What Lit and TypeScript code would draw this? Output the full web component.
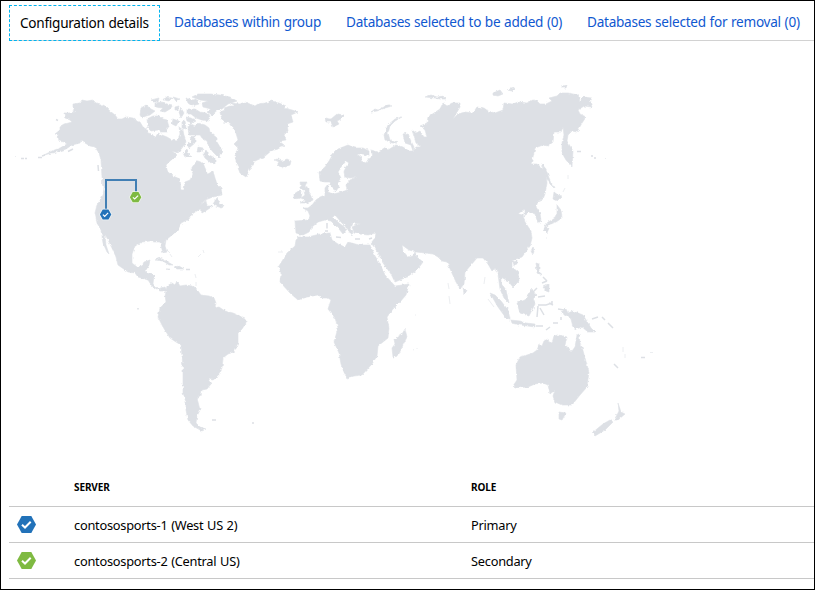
import { LitElement, html, css, svg } from "lit";
import { customElement, property } from "lit/decorators.js";

// Land outlines, in the coordinates of the map's viewBox.
const LAND: string[] = [
  // North and Central America
  "73,104 80,103 82,100 87,101 93,100 96,103 101,104 105,106 110,111 115,115 118,119 122,119 126,117 133,118 137,121 140,122 143,127 146,129 148,133 152,134 155,138 158,133 162,135 167,137 172,140 177,141 180,134 179,127 183,130 184,136 186,142 182,148 178,153 172,151 177,155 170,161 166,165 168,172 173,176 180,179 181,190 184,190 185,182 190,180 193,174 191,169 195,163 198,161 203,163 205,168 208,174 213,171 215,178 217,184 221,188 222,195 213,197 205,200 200,205 206,201 207,206 213,206 207,210 202,213 200,209 192,214 189,219 181,223 178,230 172,235 166,240 165,246 167,252 163,253 160,242 154,242 150,241 142,242 135,246 132,254 132,263 137,267 142,266 144,262 150,260 149,265 146,270 147,273 154,275 153,284 158,289 165,287 167,291 160,291 152,286 148,280 138,277 135,273 128,272 118,265 116,257 112,248 108,240 105,234 106,245 109,254 107,252 103,243 101,230 97,223 95,213 97,205 101,199 103,195 104,187 102,177 101,160 99,153 95,147 90,146 85,143 81,140 80,143 72,145 66,149 60,151 52,153 44,155 52,151 60,148 67,144 64,142 59,141 58,135 55,134 60,130 60,127 65,124 72,122 70,120 65,118 64,113 69,113 75,112 73,108",
  // South America
  "166,291 167,286 172,283 175,285 177,281 180,286 186,285 192,286 198,291 201,295 209,296 214,298 216,303 215,308 219,307 225,311 233,313 240,316 245,318 246,323 242,329 238,333 238,343 234,352 228,354 223,358 222,368 217,377 213,380 208,379 211,384 207,389 202,390 201,395 197,398 199,406 200,410 197,416 196,423 200,427 206,429 202,431 193,426 188,420 186,410 186,401 183,393 183,367 181,345 176,342 170,338 163,327 158,317 160,308 166,302 165,295",
  // Greenland
  "220,112 225,110 224,108 230,106 235,106 231,103 240,104 245,102 255,106 258,104 265,103 272,101 279,103 286,106 284,108 292,110 298,112 291,115 293,122 287,124 288,131 284,135 286,140 279,141 284,145 278,149 271,151 264,157 255,161 250,169 246,177 240,173 237,165 235,156 238,148 234,144 238,140 235,130 230,123 223,122 221,116",
  // Iceland
  "275,160 279,162 277,165 283,168 290,165 291,161 287,159 282,161 277,159",
  // Great Britain, Ireland
  "300,182 307,182 305,186 309,188 309,192 312,196 313,200 307,203 300,203 305,200 301,198 305,195 304,191 301,188",
  "294,194 300,190 302,193 301,198 294,199",
  // Europe and Asia
  "295,221 308,220 310,216 308,211 303,208 308,208 312,205 316,200 320,197 325,195 325,188 328,184 328,192 333,194 342,192 347,190 346,185 350,180 357,177 350,178 345,177 344,172 345,168 349,163 346,161 341,167 338,172 341,178 338,182 339,187 336,191 332,188 330,182 325,182 320,181 319,172 325,167 329,161 333,154 338,149 348,145 355,148 363,148 369,151 369,156 363,154 357,154 362,158 361,161 366,163 369,158 373,155 371,150 378,152 386,147 388,150 396,145 403,147 409,151 413,151 411,145 405,143 403,134 408,133 410,139 414,147 413,152 416,147 421,147 416,143 412,130 416,133 420,131 424,137 427,137 425,130 420,126 427,123 428,117 440,109 443,103 447,106 452,103 460,103 460,107 453,119 458,114 465,112 473,113 477,107 484,108 488,111 495,113 503,110 504,103 513,104 518,102 527,103 533,100 537,101 540,104 546,104 552,101 549,98 557,96 560,93 568,93 578,95 580,101 583,97 592,98 590,102 592,107 584,106 578,110 580,114 586,117 582,123 577,132 572,131 568,135 567,141 573,151 572,167 566,160 562,153 562,143 564,135 563,127 561,132 554,132 553,142 548,146 543,145 535,148 533,157 531,164 537,164 542,168 546,174 547,183 545,194 543,199 538,201 536,207 540,213 541,221 538,223 535,214 530,212 524,216 524,209 518,214 523,215 525,222 531,231 532,238 530,246 522,257 516,259 512,261 512,267 518,272 519,281 513,287 508,281 501,277 501,283 506,290 509,303 504,298 500,289 498,274 495,268 492,271 488,264 483,258 477,258 471,265 465,272 464,284 460,289 456,282 451,271 447,262 442,261 438,257 433,254 425,253 416,252 409,250 402,245 403,251 408,257 413,256 415,252 417,257 423,262 417,270 407,277 395,282 391,274 383,263 378,253 375,248 371,243 375,238 376,233 368,235 360,234 354,232 352,227 356,225 361,224 352,223 350,228 353,231 352,236 347,228 341,222 335,215 333,217 339,223 347,229 343,234 339,229 331,221 325,220 318,222 312,227 309,232 303,235 296,233",
  // Africa
  "299,237 308,237 320,234 330,233 332,240 338,244 345,247 348,242 359,245 370,245 375,256 380,264 385,275 395,286 409,284 406,295 400,302 393,309 387,317 389,328 388,338 378,346 377,356 372,364 362,375 354,376 347,378 344,372 341,364 339,353 334,342 338,328 335,318 328,309 331,300 328,298 323,298 318,295 307,297 298,300 290,293 280,282 281,273 279,266 287,253 295,246 296,240",
  "405,329 407,337 403,345 398,356 393,357 392,348 395,344 394,339 402,334",
  // Australia, Tasmania
  "537,350 539,345 542,346 544,341 548,339 549,342 552,343 554,336 558,335 563,336 567,337 565,345 572,351 575,347 577,335 579,334 580,343 582,347 585,358 589,372 587,387 580,395 572,405 562,405 555,402 553,396 555,390 550,394 548,385 543,383 535,384 528,387 515,388 513,386 517,380 516,365 520,357 527,355 533,353",
  "559,412 566,413 562,420 559,419",
  // New Zealand
  "618,403 621,412 625,414 618,420 614,420 617,415 619,411",
  "610,420 613,422 605,430 600,433 595,436 592,433 603,424",
  // New Guinea, Borneo, Sumatra, Java
  "561,312 566,309 568,313 573,311 583,315 588,323 591,328 595,332 588,332 582,327 576,329 573,327 571,319 566,315",
  "532,289 536,295 533,298 535,304 529,316 520,313 517,303 525,300",
  "490,293 495,295 501,301 508,310 510,319 506,318 498,307",
  "510,320 520,321 526,323 535,324 535,327 520,325 511,323",
  // Philippines, Taiwan, Hainan, Sri Lanka
  "536,263 539,264 539,271 542,276 537,273",
  "543,287 549,284 549,292 546,291",
  "533,247 534,251 533,255 531,251",
  "513,262 517,261 517,264 514,265",
  "463,287 466,290 464,294",
  // Japan, Sakhalin
  "554,192 558,195 562,196 557,201 553,199",
  "557,205 561,210 562,218 556,222 548,225 545,226 548,222 554,219 557,213",
  "545,226 549,228 547,233 544,230",
  "541,163 546,169 549,178 554,188 550,184 546,177",
  // Arctic islands of Eurasia
  "402,117 395,121 390,126 388,133 390,140 397,143 392,143 385,140 384,135 388,125 395,119",
  "325,118 331,119 337,114 345,115 341,119 337,121 339,124 333,127 331,122 326,122",
  "371,112 375,109 378,110 384,107 387,104 392,106 385,108 377,111",
  "425,97 431,95 437,97 443,96 446,99 440,99 435,98",
  "493,93 500,90 503,94 498,96 493,95",
  "507,90 515,88 512,91",
  "562,86 567,85 566,88 562,88",
  // Canadian Arctic
  "140,115 141,108 146,105 151,109 155,111 150,115 146,116 142,118",
  "147,119 153,116 160,116 163,119 167,120 169,127 166,128 168,132 161,132 158,130 151,131 148,128",
  "151,100 159,98 158,102 153,102",
  "155,103 162,102 167,104 173,105 170,109 165,112 160,111 163,108 155,107",
  "165,97 172,98 169,101 163,100",
  "173,119 179,121 176,126 172,124",
  "182,122 185,120 186,129 182,128",
  "181,108 184,113 181,118 179,112",
  "186,98 192,100 196,99 199,104 192,106 188,103",
  "187,109 195,109 200,112 206,113 210,116 208,121 202,120 196,118 191,114 187,114",
  "192,97 198,94 210,94 220,95 230,97 237,101 228,104 222,109 216,111 212,116 207,112 211,109 203,107 202,103 208,101 200,100",
  "188,127 191,124 195,126 198,123 205,125 209,128 210,132 217,138 217,142 223,152 220,154 219,158 213,152 209,147 207,141 202,138 200,135 194,135 189,135",
  "190,137 195,136 195,143 189,148 187,144 192,142",
  "206,150 209,155 215,158 215,164 211,163 205,158 203,154",
  "183,153 187,149 189,155 192,157 185,157",
  "198,147 203,148 202,152 197,152",
  "186,117 191,118 196,121 192,123 187,121",
  "175,107 179,106 178,110 175,110",
  "173,97 180,99 176,101",
  // Newfoundland
  "213,204 217,198 219,203 224,205 222,208 216,206",
  // Caribbean
  "155,260 160,258 166,261 173,265 169,265 163,261",
  "174,267 179,266 184,269 177,269",
  "166,269 170,269 169,270",
];

// Chains of small islands: thin lines rather than areas.
const ISLETS: string[] = [
  "M21 158.500h3M25 158.500h2M38 157.500h4M42 156l3 -1M68 151.500l5 -2.500",
  "M56 119.500l2 1M98 165l.5 6M102 180v4M186 269.500h4",
  "M138 308v1.500M212 420h4M252 423h2",
  "M327 223v5M325 231h3M336 237l5 .5M327 224.500v4M355 239h5M369 239l3 -1",
  "M538 297l7 -1M538 305l8 0l6 -2M538 306l-1 11M540 308l4 7M549 303l4 2M552 301v4",
  "M536 326h7M546 330l4 -3M553 323l5 0M558 309l6 1M561 317v3",
  "M543 277l4 4M542 283l5 -2M533 292l4 -4",
  "M592 319l6 -2M602 317l3 3M608 323l5 5M614 364l4 4M641 357.500h4",
  "M577 151.500h4M591 156h2M594 158h2",
];

// Specks that are barely there.
const SPECKS: string[] = [
  "M15 156.500h1M198 257l3 -3M203 250l1 3M168 251l2 2M170 254l2 3M195 274l1 4M196 282v4",
  "M281 251h1M278 252h5M413 350l1 -.5M417 348v1M415 315h1",
  "M448 283l1 6M485 277l-1 7M449 296l1 8M488 299l6 8",
  "M623 347v5M625 354v4M650 352.500h3M605 158.500h1M568 175v4M565 188l-2 4M546 238h1",
];

const hexagon = "0,8.500 4.700,0 14.300,0 19,8.500 14.300,17 4.700,17";

const mark = (colour: string) => svg`
  <polygon points=${hexagon} fill=${colour}></polygon>
  <path d="M5 8.700 L8 11.500 L13.700 5.800" fill="none" stroke="#fff" stroke-width="2"></path>
`;

@customElement("region-map")
export class RegionMap extends LitElement {
  static styles = css`
    :host { display: block; }
    svg { display: block; width: 813px; height: 426px; }
    .land { fill: #dde0e5; stroke: #dde0e5; stroke-width: 0.6; }
    .islets { fill: none; stroke: #dde0e5; stroke-width: 1.5; }
    .specks { fill: none; stroke: #eceef1; stroke-width: 1; }
    .link { fill: none; stroke: #417fb4; stroke-width: 2; }
  `;

  render() {
    return html`
      <svg viewBox="1 41 813 426">
        <defs>
          <filter id="coast" x="0" y="41" width="700" height="420" filterUnits="userSpaceOnUse" color-interpolation-filters="sRGB">
            <feTurbulence type="fractalNoise" baseFrequency="0.3" numOctaves="2" seed="4"></feTurbulence>
            <feDisplacementMap in="SourceGraphic" scale="3" xChannelSelector="R" yChannelSelector="G"></feDisplacementMap>
          </filter>
        </defs>
        <g class="land" filter="url(#coast)">${LAND.map((p) => svg`<polygon points=${p}></polygon>`)}</g>
        <g class="islets">${ISLETS.map((d) => svg`<path d=${d}></path>`)}</g>
        <g class="specks">${SPECKS.map((d) => svg`<path d=${d}></path>`)}</g>
        <path class="link" d="M106 210 V180 H136 V193"></path>
        <g transform="translate(99.900 209.400) scale(.6)">
          <polygon points=${hexagon} fill="none" stroke="#eef3f5" stroke-width="2.500"></polygon>${mark("#2272b9")}
        </g>
        <g transform="translate(129.900 192.100) scale(.6)">
          <polygon points=${hexagon} fill="none" stroke="#eef5e8" stroke-width="2.500"></polygon>${mark("#7fba42")}
        </g>
      </svg>
    `;
  }
}

@customElement("server-table")
export class ServerTable extends LitElement {
  @property({ attribute: false }) rows: { name: string; role: string; colour: string }[] = [];

  static styles = css`
    :host { display: block; margin-left: 8px; }
    .row {
      display: grid;
      grid-template-columns: 65px 397px 1fr;
      align-items: center;
      height: 35px;
      border-bottom: 1px solid #c8c8c8;
      font-size: 12.8px;
      letter-spacing: -0.25px;
      word-spacing: 0.6px;
    }
    .head { height: 39px; font-size: 10px; font-weight: 700; letter-spacing: -0.1px; }
    .icon { display: block; margin-left: 8px; width: 19px; height: 17px; }
    .text { padding-top: 1px; }
    .head .text { padding: 0; }
  `;

  render() {
    return html`
      <div class="row head"><span></span><span class="text">SERVER</span><span class="text">ROLE</span></div>
      ${this.rows.map((r) => html`
        <div class="row">
          <svg class="icon" viewBox="0 0 19 17">${mark(r.colour)}</svg>
          <span class="text">${r.name}</span>
          <span class="text">${r.role}</span>
        </div>
      `)}
    `;
  }
}

@customElement("app-root")
export class AppRoot extends LitElement {
  private tabs = [
    "Databases within group",
    "Databases selected to be added (0)",
    "Databases selected for removal (0)",
  ];

  private servers = [
    { name: "contososports-1 (West US 2)", role: "Primary", colour: "#2272b9" },
    { name: "contososports-2 (Central US)", role: "Secondary", colour: "#7fba42" },
  ];

  static styles = css`
    :host {
      display: flex;
      flex-direction: column;
      box-sizing: border-box;
      width: 815px;
      height: 590px;
      border: 1px solid #000;
      background: #fff;
      color: #000;
      font-family: "Noto Sans", sans-serif;
      overflow: hidden;
    }
    .tabs {
      display: flex;
      box-sizing: border-box;
      height: 40px;
      padding-top: 4px;
      margin-left: 8px;
      border-bottom: 1px solid #d2d2d2;
      font-size: 13.6px;
      letter-spacing: -0.27px;
      word-spacing: 0.5px;
      white-space: nowrap;
    }
    .tab { flex: none; color: #1058d0; line-height: 34px; margin-right: 25px; }
    .active {
      box-sizing: border-box;
      width: 151px;
      height: 36px;
      padding-left: 10px;
      margin-right: 14px;
      border: 1px dashed #00b4f0;
      color: #000;
    }
  `;

  render() {
    return html`
      <div class="tabs">
        <span class="tab active">Configuration details</span>
        ${this.tabs.map((t) => html`<span class="tab">${t}</span>`)}
      </div>
      <region-map></region-map>
      <server-table .rows=${this.servers}></server-table>
    `;
  }
}
